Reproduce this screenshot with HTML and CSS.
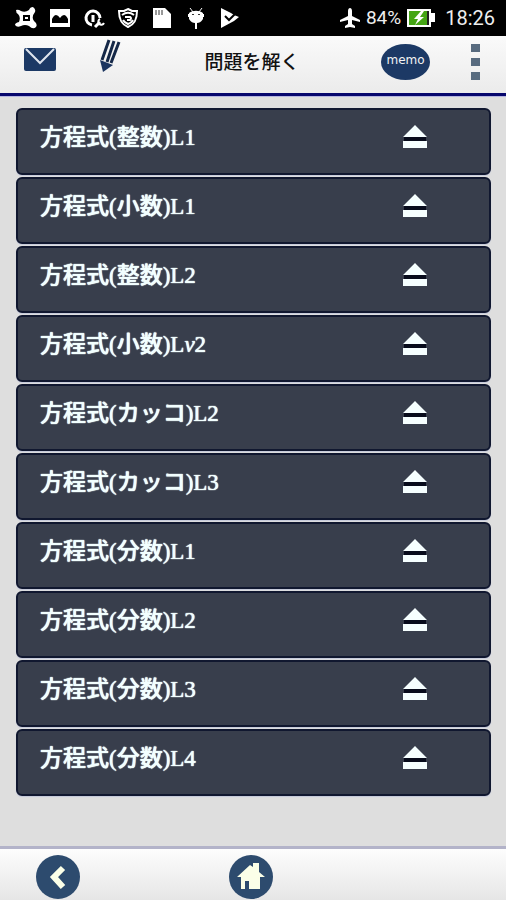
FILE: index.html
```html
<!DOCTYPE html>
<html lang="ja">
<head>
  <meta charset="UTF-8">
  <meta name="viewport" content="width=device-width, initial-scale=1.0">
  <title>問題を解く</title>
  <link rel="stylesheet" href="styles.css">
</head>
<body>
  <div class="status-bar">
    <div class="status-icons">
      <svg viewBox="0 0 22 22"><path fill="#fff" fill-rule="evenodd" d="M1 3Q3 2 6 4Q10 6 14 3Q15 0 18 0Q21 2 20 5Q16 10 19 14Q23 17 21 20Q18 23 14 19Q10 17 6 19Q2 21 0 18Q0 16 4 15Q6 10 3 7Q1 6 1 3ZM8 8V14H15V8Z"/><path fill="#fff" d="M10 10h3v2h-3z"/></svg>
      <svg viewBox="0 0 22 22"><path fill="#fff" fill-rule="evenodd" d="M1 2h20v18H1ZM3 16h16v-4q-2-4-4-4t-4 3q-2-3-4-3t-4 4Z"/></svg>
      <svg viewBox="0 0 22 22"><path fill="none" stroke="#fff" stroke-width="3" d="M9 18A7 7 0 1 1 17 11"/><path fill="none" stroke="#fff" stroke-width="3" d="M10 8v7M12 20l5-5"/><path fill="none" stroke="#fff" stroke-width="2" d="M17 12a3 3 0 1 0 4 4"/></svg>
      <svg viewBox="0 0 22 22"><path fill="none" stroke="#fff" stroke-width="2" d="M11 2 15 4 20 4C20 12 18 17 11 20 4 17 2 12 2 4L7 4Z"/><path fill="none" stroke="#fff" stroke-width="2" d="M5 8c4-3 8-3 12 0M6 13c1 2 3 3 5 4 3-1 4-2 5-4M8 10h5q2 1 0 3H10"/></svg>
      <svg viewBox="0 0 22 22"><path fill="#fff" d="M2 1h12l6 6v14H2Z"/><path stroke="#333" stroke-width="1" d="M5 3v5M8 3v5M11 3v5"/></svg>
      <svg viewBox="0 0 22 22"><path fill="#fff" d="M4 6C8 3 14 3 18 6V12C16 15 14 16 12 16V22H10V16C8 16 6 15 4 12ZM3 7h2v3H3ZM17 7h2v3h-2Z"/><path stroke="#fff" stroke-width="1" d="M5 1 8 5M17 1 14 5"/><path fill="#333" d="M7 7h2v1H7zM13 7h2v1h-2z"/></svg>
      <svg viewBox="0 0 22 22"><path fill="#fff" d="M2 1 12 6 15 8 20 10 15 14 2 21Z"/><path fill="none" stroke="#000" stroke-width="2" d="m6 9 4 4 8-8"/></svg>
    </div>
    <div class="status-info">
      <svg viewBox="0 0 20 20"><path fill="#fff" d="M10 0c1 0 2 1 2 3v5l8 4v2l-8-2v4l3 2v2l-5-1-5 1v-2l3-2v-4l-8 2v-2l8-4V3c0-2 1-3 2-3Z"/></svg>
      <span>84%</span>
      <svg class="battery" viewBox="0 0 28 20"><path fill="#fff" d="M0 1h24v4h4v9h-4v5H0Z"/><path fill="#45a514" d="M2 3h18v14H2Z"/><path fill="#222" d="M20 3h2v14h-2z"/><path fill="#fff" d="m14 3-7 8h4l-3 6 9-8h-4l4-6Z"/></svg>
      <span class="clock">18:26</span>
    </div>
  </div>

  <header class="header">
    <div class="tools">
      <button aria-label="メール"><svg class="mail" viewBox="0 0 32 23"><rect width="32" height="23" rx="2" fill="#1c3965"/><path fill="none" stroke="#dfe5ee" stroke-width="2" d="m2 1 14 14L30 1"/></svg></button>
      <button aria-label="鉛筆"><svg class="pencil" viewBox="0 0 22 34"><path fill="none" stroke="#152848" stroke-width="3" d="M10 1 3 21M15 2 8 23M20 3 12 24"/><path fill="#1c3560" d="M1 21 14 26 4 33Z"/></svg></button>
    </div>
    <h1>問題を解く</h1>
    <div class="tools right">
      <button class="memo">memo</button>
      <button class="menu" aria-label="メニュー"><span></span><span></span><span></span></button>
    </div>
  </header>

  <main>
    <ul class="list" id="list">
    </ul>
  </main>

  <footer class="footer">
    <button class="round" aria-label="戻る"><svg viewBox="0 0 44 44"><path fill="none" stroke="#fbffe8" stroke-width="6" d="M27 13 18 22 27 32"/></svg></button>
    <button class="round" aria-label="ホーム"><svg viewBox="0 0 44 44"><path fill="#fbffe8" d="M8 22 21 10 24 12V8h6v9l6 5h-5v12H20v-8h-4v8h-4V22Z"/></svg></button>
  </footer>

  <script>
    const items = [
      '方程式(整数)L1',
      '方程式(小数)L1',
      '方程式(整数)L2',
      '方程式(小数)L<i>v</i>2',
      '方程式(カッコ)L2',
      '方程式(カッコ)L3',
      '方程式(分数)L1',
      '方程式(分数)L2',
      '方程式(分数)L3',
      '方程式(分数)L4'
    ];

    document.getElementById('list').innerHTML = items.map(item => `
      <li>
        <button class="item">
          <span>${item}</span>
          <svg viewBox="0 0 26 24"><path fill="#080c1c" d="M2 11h22v6H2z"/><path fill="#f6ffff" d="M13 0 25 12H1ZM1 16h24v7H1Z"/></svg>
        </button>
      </li>`).join('');
  </script>
</body>
</html>
```

FILE: styles.css
```css
* { box-sizing: border-box; }
body { margin: 0; min-height: 100vh; display: flex; flex-direction: column; background: #dedede; font-family: "Noto Sans CJK JP", sans-serif; }
button { padding: 0; border: 0; background: none; font: inherit; cursor: pointer; }
svg { display: block; }

.status-bar { display: flex; justify-content: space-between; align-items: center; height: 36px; padding: 0 11px 0 15px; background: #000; color: #eee; font: 19px/36px Roboto, sans-serif; }
.status-icons { display: flex; gap: 12px; }
.status-icons svg { width: 22px; height: 22px; }
.status-info { display: flex; align-items: center; gap: 6px; }
.status-info svg { width: 20px; height: 20px; }
.status-info .battery { width: 28px; }
.clock { margin-left: 4px; font-size: 20px; }

.header { display: grid; grid-template-columns: 1fr auto 1fr; height: 60px; padding: 0 26px 0 24px; background: linear-gradient(#fafafa, #ebebeb); border-bottom: 3px solid #06066c; box-shadow: 0 1px 0 #b4b4e0; }
.header h1 { margin: 11px 0 0; font-size: 19px; line-height: 28px; font-weight: 500; color: #111; }
.tools { display: flex; align-items: flex-start; gap: 43px; }
.tools.right { justify-content: flex-end; gap: 41px; padding-top: 8px; }
.mail { width: 32px; height: 23px; margin-top: 12px; }
.pencil { width: 22px; height: 34px; margin-top: 3px; }
.memo { width: 49px; height: 36px; padding-bottom: 4px; border-radius: 50%; background: #1c3965; color: #f4f4f4; font: 12px/16px "DejaVu Sans", sans-serif; }
.menu { display: flex; flex-direction: column; gap: 6px; }
.menu span { width: 9px; height: 8px; background: #586b7f; }

main { flex: 1; padding: 12px 15px 12px 16px; }
.list { display: flex; flex-direction: column; gap: 2px; margin: 0; padding: 0; list-style: none; }
.item { display: flex; justify-content: space-between; align-items: flex-start; width: 100%; height: 67px; padding: 15px 61px 0 22px; border: 2px solid #10172f; border-radius: 6px; background: #383e4c; box-shadow: 0 1px 1px #c4c8da; color: #f2ffff; font: 500 23px/26px "Liberation Serif", "Noto Sans CJK JP", serif; text-shadow: 0 0 1px #f2ffff, 0 0 1px #f2ffff; }
.item svg { width: 26px; height: 24px; }

.footer { display: grid; grid-template-columns: 1fr auto 1fr; height: 54px; padding: 6px 40px 0 36px; border-top: 3px solid #b3b3c9; background: linear-gradient(#fdfdfd, #e6e6e6); }
.round { width: 44px; height: 44px; border-radius: 50%; background: #2d4b6e; }
```
